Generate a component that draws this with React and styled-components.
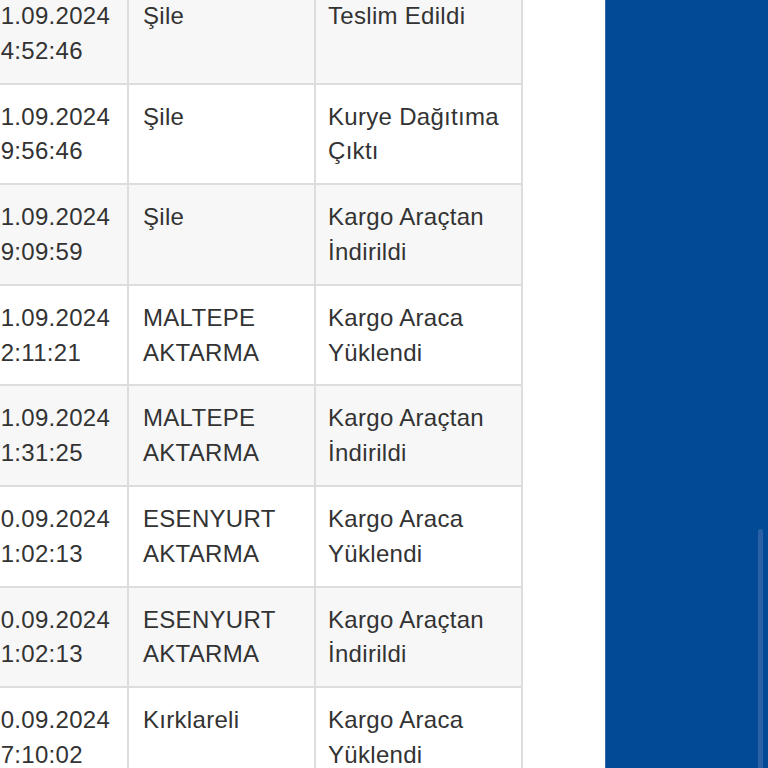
import React from "react";
import styled, { createGlobalStyle } from "styled-components";

const GlobalStyle = createGlobalStyle`
  html, body {
    margin: 0;
    padding: 0;
    background: #ffffff;
    overflow: hidden;
  }
  body {
    font-family: "Liberation Sans", Arial, Helvetica, sans-serif;
  }
`;

const Page = styled.div`
  display: flex;
  width: 768px;
  height: 768px;
  overflow: hidden;
`;

const TableArea = styled.div`
  flex: 1;
  min-width: 0;
  overflow: hidden;
  background: #ffffff;
`;

const Table = styled.table`
  border-collapse: collapse;
  table-layout: fixed;
  width: 548px;
  margin-left: -28px;
  margin-top: -18px;
  font-size: 24px;
  line-height: 34.8px;
  letter-spacing: 0.3px;
  color: #333333;
`;

const Row = styled.tr`
  background: ${(p) => (p.$striped ? "#f7f7f7" : "#ffffff")};
`;

const Cell = styled.td`
  border: 2px solid #dddddd;
  padding: 15px 8px 14px ${(p) => p.$pl}px;
  vertical-align: top;
  word-wrap: break-word;
`;

const SidePanel = styled.div`
  position: relative;
  width: 163px;
  flex: 0 0 163px;
  height: 768px;
  background: #034a96;
  border-left: 1px solid #2f66a8;
  box-sizing: border-box;
`;

const ScrollIndicator = styled.div`
  position: absolute;
  left: 152px;
  top: 529px;
  width: 5px;
  height: 260px;
  border-radius: 3px;
  background: #2a60a6;
`;

const rows = [
  ["21.09.2024 14:52:46", "Şile", "Teslim Edildi"],
  ["21.09.2024 09:56:46", "Şile", "Kurye Dağıtıma Çıktı"],
  ["21.09.2024 09:09:59", "Şile", "Kargo Araçtan İndirildi"],
  ["21.09.2024 02:11:21", "MALTEPE AKTARMA", "Kargo Araca Yüklendi"],
  ["21.09.2024 01:31:25", "MALTEPE AKTARMA", "Kargo Araçtan İndirildi"],
  ["20.09.2024 21:02:13", "ESENYURT AKTARMA", "Kargo Araca Yüklendi"],
  ["20.09.2024 21:02:13", "ESENYURT AKTARMA", "Kargo Araçtan İndirildi"],
  ["20.09.2024 17:10:02", "Kırklareli", "Kargo Araca Yüklendi"],
];

export default function App() {
  return (
    <>
      <GlobalStyle />
      <Page>
        <TableArea>
          <Table>
            <colgroup>
              <col style={{ width: 155 }} />
              <col style={{ width: 187 }} />
              <col style={{ width: 207 }} />
            </colgroup>
            <tbody>
              {rows.map((r, i) => (
                <Row key={i} $striped={i % 2 === 0}>
                  <Cell $pl={13}>{r[0]}</Cell>
                  <Cell $pl={14}>{r[1]}</Cell>
                  <Cell $pl={12}>{r[2]}</Cell>
                </Row>
              ))}
            </tbody>
          </Table>
        </TableArea>
        <SidePanel>
          <ScrollIndicator />
        </SidePanel>
      </Page>
    </>
  );
}
